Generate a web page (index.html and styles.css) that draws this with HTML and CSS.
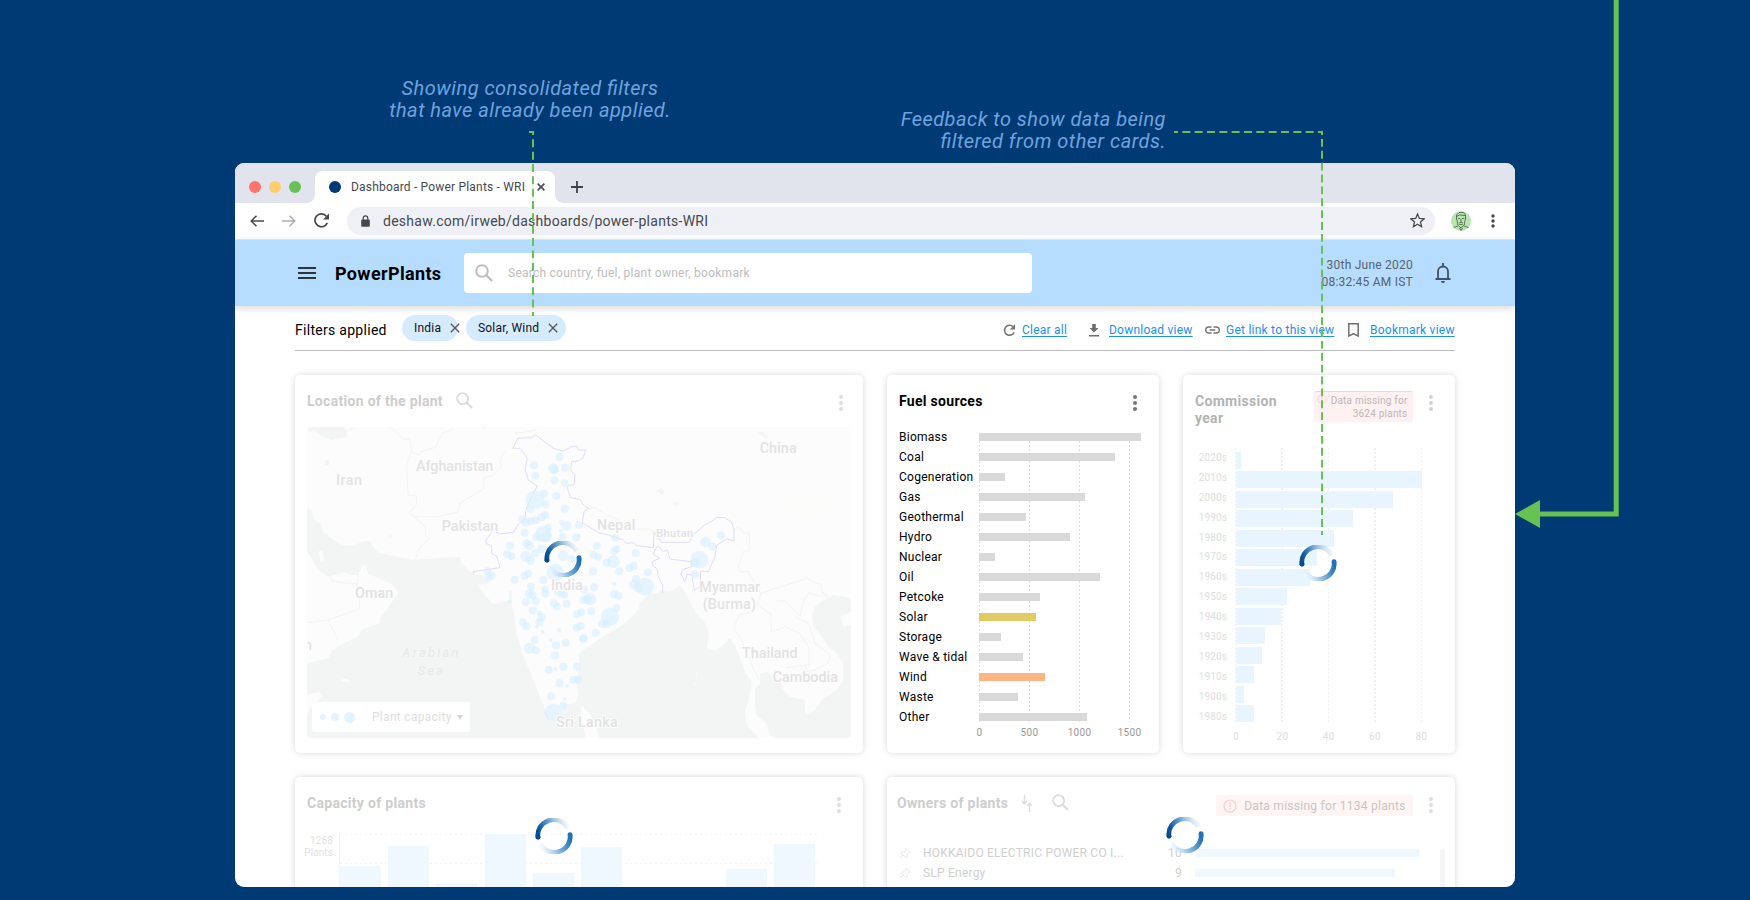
FILE: index.html
```html
<!DOCTYPE html>
<html lang="en">
<head>
<meta charset="utf-8">
<title>Dashboard - Power Plants - WRI</title>
<link rel="stylesheet" href="styles.css">
</head>
<body>
<svg class="defs" width="0" height="0">
  <defs>
    <linearGradient id="arc-top" gradientUnits="userSpaceOnUse" x1="3" y1="20" x2="34" y2="8">
      <stop offset="0" stop-color="#064a8c"/><stop offset=".15" stop-color="#0f5a9f"/><stop offset=".55" stop-color="#7fafd8"/><stop offset="1" stop-color="#e8f3fc" stop-opacity=".5"/>
    </linearGradient>
    <linearGradient id="arc-bottom" gradientUnits="userSpaceOnUse" x1="35" y1="18" x2="5" y2="29">
      <stop offset="0" stop-color="#1f6fb6"/><stop offset=".15" stop-color="#3a83c4"/><stop offset=".6" stop-color="#a5cbea"/><stop offset="1" stop-color="#eef7fe" stop-opacity=".5"/>
    </linearGradient>
    <symbol id="spinner" viewBox="0 0 38 36">
      <path d="M3 19.500A16 15.500 0 0 1 33 10" fill="none" stroke="url(#arc-top)" stroke-width="4.800"/>
      <path d="M35 16.500A16 15.500 0 0 1 5 26" fill="none" stroke="url(#arc-bottom)" stroke-width="4.800"/>
      <circle cx="3" cy="19.300" r="2.400" fill="#064a8c"/><circle cx="35" cy="16.700" r="2.400" fill="#2272b8"/>
    </symbol>
    <symbol id="search" viewBox="0 0 18 18"><circle cx="7" cy="7" r="5.800" fill="none" stroke="currentColor" stroke-width="2"/><path d="M11 11l6 6" stroke="currentColor" stroke-width="2.300"/></symbol>
    <symbol id="kebab" viewBox="0 0 4 16"><circle cx="2" cy="2" r="2"/><circle cx="2" cy="8" r="2"/><circle cx="2" cy="14" r="2"/></symbol>
    <symbol id="cross" viewBox="0 0 10 10"><path d="M.8.8l8.400 8.400M9.200.8L.8 9.200" stroke="currentColor" stroke-width="1.300"/></symbol>
    <symbol id="cross-bold" viewBox="0 0 8 8"><path d="M.6.6l6.800 6.800M7.400.6L.6 7.400" stroke="currentColor" stroke-width="1.500"/></symbol>
    <symbol id="alert" viewBox="0 0 14 14"><circle cx="7" cy="7" r="6" fill="none" stroke="currentColor" stroke-width="1.200"/><path d="M7 3.500v4.200M7 9.200v1.400" stroke="currentColor" stroke-width="1.400"/></symbol>
    <symbol id="pin" viewBox="0 0 14 14"><path d="M8 1l5 5-1.600.6-1.800 1.800-.2 3-1.600 1.200L2.500 7.200l1.200-1.400 3-.2L8.200 3z M4.500 9.500L1 13" fill="none" stroke="currentColor"/></symbol>
  </defs>
</svg>

<main class="window">
  <div class="tabstrip">
    <div class="lights"><i class="red"></i><i class="amber"></i><i class="green"></i></div>
    <div class="tab">
      <i class="favicon"></i><span>Dashboard - Power Plants - WRI</span>
      <svg class="tab-close"><use href="#cross-bold"/></svg>
    </div>
    <svg class="plus" viewBox="0 0 12 12"><path d="M6 0v12M0 6h12" stroke="#3f4145" stroke-width="1.800"/></svg>
  </div>

  <div class="toolbar">
    <svg class="nav" viewBox="0 0 14 12"><path d="M14 6H1.200M6.500.7L1.200 6l5.300 5.300" fill="none" stroke="#45484d" stroke-width="1.500"/></svg>
    <svg class="nav" viewBox="0 0 14 12"><path d="M0 6h12.800M7.500.7L12.800 6l-5.300 5.300" fill="none" stroke="#abafb6" stroke-width="1.500"/></svg>
    <svg class="reload" viewBox="0 0 14 14"><path d="M12.400 9.200A6 6 0 1 1 11.300 2.800L13 4.500" fill="none" stroke="#45484d" stroke-width="1.600"/><path d="M14 .5V6H8.500z" fill="#45484d"/></svg>
    <div class="omnibox">
      <svg class="lock" viewBox="0 0 9 12"><path d="M2.200 5V3.200a2.300 2.300 0 0 1 4.600 0V5" fill="none" stroke="#45484d" stroke-width="1.200"/><rect x=".2" y="4.400" width="8.600" height="7.400" rx="1" fill="#45484d"/></svg>
      <span>deshaw.com/irweb/dashboards/power-plants-WRI</span>
      <svg class="star" viewBox="0 0 14 14"><path d="M7 1l1.700 4.100 4.500.4-3.400 2.900 1 4.400L7 10.500l-3.800 2.300 1-4.400L.8 5.500l4.500-.4z" fill="none" stroke="#45484d" stroke-width="1.200"/></svg>
    </div>
    <svg class="avatar" viewBox="0 0 20 20"><circle cx="10" cy="10" r="10" fill="#b9e5b1"/><g fill="none" stroke="#33482f" stroke-width=".7"><path d="M5.500 9V4L8 1.500h4.500L14.500 4v5M5.500 5.500l3-1.500 5.500.5M6 9l.8 5L10 17l3.200-3L14 9M7 7.500h2.300M11 7.500h2.300M10 8v3M8 12.200l2-1 2 1M8.500 13.500h3M7 15l-4.500 1.500M13 15l4.500 1.500M8.500 17l1.500 2.500 1.500-2.500"/></g></svg>
    <svg class="menu" viewBox="0 0 4 14"><g fill="#45484d"><circle cx="2" cy="2" r="1.700"/><circle cx="2" cy="7" r="1.700"/><circle cx="2" cy="12" r="1.700"/></g></svg>
  </div>

  <header class="appbar">
    <svg class="burger" viewBox="0 0 18 12"><path d="M0 1h18M0 6h18M0 11h18" stroke="#2b333b" stroke-width="2"/></svg>
    <h1>PowerPlants</h1>
    <div class="searchbox"><svg><use href="#search"/></svg><span>Search country, fuel, plant owner, bookmark</span></div>
    <div class="clock">30th June 2020<br>08:32:45 AM IST</div>
    <svg class="bell" viewBox="0 0 16 20"><path d="M3 16V8.500a5 5 0 0 1 10 0V16" fill="none" stroke="#44525f" stroke-width="1.800"/><path d="M.5 16h15M8 0v3" stroke="#44525f" stroke-width="1.900"/><path d="M6 18a2 2 0 0 0 4 0z" fill="#44525f"/></svg>
  </header>

  <section class="content">
    <div class="filters">
      <span class="filters-title">Filters applied</span>
      <span class="chip india">India<svg><use href="#cross"/></svg></span>
      <span class="chip fuels">Solar, Wind<svg><use href="#cross"/></svg></span>
      <nav class="actions">
        <svg class="a-clear" viewBox="0 0 14 14"><path d="M12 9a5.400 5.400 0 1 1-1-6" fill="none" stroke="#757575" stroke-width="1.700"/><path d="M13 0v5.800H7.400z" fill="#757575"/></svg><a class="l-clear">Clear all</a>
        <svg class="a-down" viewBox="0 0 10 13"><path d="M3.200 0h3.600v4H9.500L5 8.600.5 4h2.700zM0 11h10v1.500H0z" fill="#6f6f6f"/></svg><a class="l-down">Download view</a>
        <svg class="a-link" viewBox="0 0 16 8"><path d="M7 .8H4a3.200 3.200 0 0 0 0 6.400h3M9 .8h3a3.200 3.200 0 0 1 0 6.400H9M5 4h6" fill="none" stroke="#757575" stroke-width="1.500"/></svg><a class="l-link">Get link to this view</a>
        <svg class="a-mark" viewBox="0 0 11 14"><path d="M.8.8h9.400v12.200L5.500 10.800.8 13z" fill="none" stroke="#6f6f6f" stroke-width="1.500"/></svg><a class="l-mark">Bookmark view</a>
      </nav>
    </div>

    <div class="cards">
      <article class="card location">
        <div class="card-head faded"><h2>Location of the plant</h2><svg class="find"><use href="#search"/></svg><svg class="kebab"><use href="#kebab"/></svg></div>
        <div class="map">
          <svg viewBox="51 171 1632 933" width="544" height="311">
            <rect x="51" y="171" width="1632" height="933" fill="#fcfcfc"/>
            <g fill="#f3f5f5">
              <path d="M51 171h112l8 12-2 18-45 9-30-12-20-13-23-4z"/>
              <path d="M51 415l14 10 10 25 20 15 5 20 25 20 30 20 35 3 25-13 25-3 10 18 15 18 35 7 70 15 70-5 70-5 5 20 20 20 15 12 30 5 22 20-37 8 12 20 33 38 48-13-3-30 10 5v40l10 40 5 50 20 60 20 50 20 50 25 60 15 40 25-5 15-25v-20l35-5 10-25-5-40 10-50-5-30 10-12 15-10 40-28 45-25 40-30 30-30 5-20 30-30h25l5-10 30 5 30-20 10 15 10 15 15 30 10 20 25 25 15 30v25l-5 30 25 8 25-18 20-22 15 22 15 40 20 50 15 20-10 60-10 30 3 30 15 25 28 29H51v-76l12-20 32-35-8-13-36 9v-94l64-16 10-20 20-15 60-30 10-20 53-20 2-15 20-25 10-15 25-35-15-25-40-18-35-14-7-23-10-5-13 30-25 2-15-10-25 8-30 5-20-15-15-20-10-20-14-20z"/>
              <path d="M1395 955l15-15v-30l25-5 15 20 20 5 10 30 20 20 45 10v45l30-15 20-30 45-30 20-30v-50l-20-30-25-20-25-40-20-20-5-30 10-30 25-20 30-15 53 10v424h-218l-25-14-10-34-30-25-5-30z"/>
              <circle cx="111" cy="278" r="8"/><path d="M297 493l11 6-10 9zM1404 187l15-2 16 14-9 8zM1102 362l12-8 10 12-8 10zM1148 397h20l-6 7h-12z"/>
            </g>
            <g fill="#fcfcfc"><path d="M875 1008q45 35 50 96h-35q-20-50-15-96zM1650 740l33-15v40l-20 5zM85 545l12-4 6 30-10 5z"/><ellipse cx="165" cy="932" rx="13" ry="4"/><path d="M1218 910l4-4-3 25zM1213 940l3-4v15z"/></g>
            <ellipse cx="1560" cy="410" rx="58" ry="38" fill="#fcfcfa"/>
            <g fill="none" stroke="#f0f0f0" stroke-width="2.500">
              <path d="M165 184l30-10M295 171l20 10 25 26h20l5 37 22 12 5-10 45-15 20-43 28-7 5-12h60l15-3 15 8 30-8"/>
              <path d="M365 244l-15 40 4 90 27 5-2 25-22 25 15 10 70 1 60-13 8-28 30-18 40-24 3-35 27-5 25-27-5-20 15-30M357 429l50 41v25l10 10-32 33-8 32M100 595l30 40 72 8 4-40M202 643l8 70-15 8-79 28-65 9M115 750l30 63M675 190l40-5 24-5"/>
              <path d="M885 420l30-8 30 20 40 15 30 30h60l20 10M1330 480l15-10 15 18 18 2v55l-15-5-18 45 5 20h28l2 10 22 35 10 20-10 38-20 18-35 8-15 40 25 40 20 50 15 35 15 30M1405 690l10-20 40-15 20-5 78-25 18 12 22 5 3 25 20 10-30 1-30-10-18 30-8 40-28-28-15-15-28-5M1410 710l20 15 12 5 2 55 40-15 45 20 28 45v50l-70 8M1515 740l40 20 20 60 45 35-5 25-40 20-25 5-5-28"/>
            </g>
            <path fill="none" stroke="#e0dcf9" stroke-width="3" d="M550 613V605L630 593 620 558 605 550V528L588 520V510L610 482 628 492 670 487 686 462 708 444 706 424 720 390 742 348 715 330 705 300 712 265 690 235H668L683 205 725 203 737 195 790 235 820 243 845 230 860 228 865 240H887L880 262 868 272 845 275 842 300 855 315 852 345 835 345 832 355 842 383 870 388 880 405 895 415 882 425 877 458 925 488 955 495 1000 510 1010 520 1030 518 1040 527 1090 533 1092 487 1115 517H1198L1210 495 1240 468 1265 453 1280 442 1305 443 1325 457 1332 480V513L1310 507 1280 525 1275 560 1255 605 1232 603 1230 650 1213 660 1205 615 1192 612 1185 635 1172 612 1180 598 1205 590 1203 575 1140 567 1132 540 1120 545 1105 528 1098 533 1090 552 1108 565 1087 575V585L1102 597 1105 620 1118 645V670"/>
            <g id="plants" fill="#d6efff" fill-opacity=".6"></g>
            <g class="places">
              <text x="138" y="345" textLength="78">Iran</text><text x="378" y="304" textLength="232">Afghanistan</text><text x="455" y="483" textLength="170">Pakistan</text><text x="195" y="684" textLength="115">Oman</text><text x="783" y="661" textLength="95">India</text><text x="1409" y="250" textLength="111">China</text><text x="921" y="480" textLength="115">Nepal</text><text x="1098" y="502" textLength="112" font-size="34">Bhutan</text><text x="1228" y="667" textLength="182">Myanmar</text><text x="1238" y="716" textLength="160">(Burma)</text><text x="1356" y="863" textLength="167">Thailand</text><text x="1448" y="937" textLength="196">Cambodia</text><text x="798" y="1071" textLength="185">Sri Lanka</text><text x="42" y="840">n</text>
              <g class="sea"><text x="337" y="862" textLength="168">Arabian</text><text x="383" y="915" textLength="76">Sea</text></g>
            </g>
          </svg>
          <div class="legend"><i></i><i></i><i></i><span>Plant capacity</span><b></b></div>
        </div>
        <svg class="spinner"><use href="#spinner"/></svg>
      </article>

      <article class="card fuel">
        <div class="card-head"><h2>Fuel sources</h2><svg class="kebab"><use href="#kebab"/></svg></div>
        <div class="fuel-chart"><div class="fuel-rows" id="fuel-rows"></div></div>
        <div class="axis fuel-axis"><span>0</span><span>500</span><span>1000</span><span>1500</span></div>
      </article>

      <article class="card commission">
        <div class="card-head"><h2>Commission<br>year</h2><div class="warn small"><svg><use href="#alert"/></svg>Data missing for<br>3624 plants</div><svg class="kebab"><use href="#kebab"/></svg></div>
        <div class="years-chart"><div class="years" id="years"></div><div class="year-bars" id="year-bars"></div></div>
        <div class="axis year-axis"><span>0</span><span>20</span><span>40</span><span>60</span><span>80</span></div>
        <svg class="spinner"><use href="#spinner"/></svg>
      </article>

      <article class="card capacity">
        <div class="card-head faded"><h2>Capacity of plants</h2><svg class="kebab"><use href="#kebab"/></svg></div>
        <div class="capacity-chart"><div class="cap-label">1268<br>Plants</div><div class="cap-bars" id="cap-bars"></div></div>
        <svg class="spinner"><use href="#spinner"/></svg>
      </article>

      <article class="card owners">
        <div class="card-head faded"><h2>Owners of plants</h2>
          <svg class="sort" viewBox="0 0 12 17"><path d="M3.500 0v8M1 6l2.500 3L6 6M8.500 17V9M6 11l2.500-3L11 11" fill="none" stroke="currentColor" stroke-width="1.400"/></svg>
          <svg class="find"><use href="#search"/></svg>
          <div class="warn wide"><svg><use href="#alert"/></svg>Data missing for 1134 plants</div>
          <svg class="kebab"><use href="#kebab"/></svg></div>
        <div class="owner-body">
          <div class="owner-rows">
            <div class="owner"><svg><use href="#pin"/></svg><span>HOKKAIDO ELECTRIC POWER CO I...</span><b>10</b><i class="ten"></i></div>
            <div class="owner"><svg><use href="#pin"/></svg><span>SLP Energy</span><b>9</b><i class="nine"></i></div>
          </div>
          <div class="scrollbar"></div>
        </div>
        <svg class="spinner"><use href="#spinner"/></svg>
      </article>
    </div>
  </section>
</main>

<p class="note note-filters">Showing consolidated filters<br>that have already been applied.</p>
<p class="note note-feedback">Feedback to show data being<br>filtered from other cards.</p>
<svg class="connectors" width="1750" height="900">
  <g fill="none" stroke="#65c253" stroke-width="2">
    <path d="M529 132h5"/>
    <path d="M533 131v185" stroke-dasharray="8 4.330" stroke-dashoffset="4"/>
    <path d="M1174 132h148" stroke-dasharray="8 4.330" stroke-dashoffset="4"/>
    <path d="M1322 131v404" stroke-dasharray="7.880 4" stroke-dashoffset="3.940"/>
    <path d="M1616.200 0v514H1538" stroke-width="5"/>
  </g>
  <path d="M1515 514l25-14v28z" fill="#65c253"/>
</svg>
<script src="charts.js"></script>
</body>
</html>
```

FILE: styles.css
```css
* { box-sizing: border-box; }
body { margin: 0; padding: 163px 0 0 235px; width: 1750px; height: 900px; overflow: hidden; position: relative; background: #003a74; font-family: Roboto, "Liberation Sans", sans-serif; }
svg { display: block; flex: none; }
.defs { position: absolute; }
h1, h2, p { margin: 0; }

.window { width: 1280px; height: 724px; overflow: hidden; background: #fff; border-radius: 9px; }

.tabstrip { height: 40px; background: #e1e4ec; display: flex; align-items: center; padding: 8px 0 0 14px; }
.lights { display: flex; gap: 8px; width: 66px; }
.lights i { width: 12px; height: 12px; border-radius: 50%; }
.red { background: #ff7468; }
.amber { background: #ffce6b; }
.green { background: #65c253; }
.tab { width: 240px; height: 32px; display: flex; align-items: center; background: #fff; border-radius: 8px 8px 0 0; padding-left: 14px; position: relative; color: #45484d; font-size: 12px; letter-spacing: .19px; white-space: nowrap; }
.tab::before, .tab::after { content: ""; position: absolute; bottom: 0; width: 8px; height: 8px; }
.tab::before { left: -8px; background: radial-gradient(circle at 0 0, transparent 7.500px, #fff 8px); }
.tab::after { right: -8px; background: radial-gradient(circle at 100% 0, transparent 7.500px, #fff 8px); }
.favicon { width: 12px; height: 12px; border-radius: 50%; background: #003a74; margin-right: 10px; }
.tab span { width: 186px; }
.tab-close { width: 8px; height: 8px; color: #45484d; }
.plus { width: 12px; height: 12px; margin-left: 16px; }

.toolbar { height: 37px; display: flex; align-items: center; padding: 0 0 1px 15px; border-bottom: 1px solid #e4eefa; }
.nav { width: 14px; height: 12px; margin-right: 18px; }
.reload { width: 15px; height: 15px; margin-right: 18px; }
.omnibox { width: 1088px; height: 28px; border-radius: 14px; background: #eff0f5; display: flex; align-items: center; padding-left: 14px; color: #45484d; font-size: 14px; letter-spacing: .27px; }
.lock { width: 9px; height: 12px; margin-right: 13px; }
.omnibox span { width: 1027px; }
.star { width: 15px; height: 15px; }
.avatar { width: 20px; height: 20px; margin-left: 16px; }
.menu { width: 4px; height: 14px; margin-left: 20px; }

.appbar { height: 66px; background: #b6ddff; box-shadow: 0 2px 8px rgba(0, 0, 0, .16); position: relative; display: flex; align-items: center; padding-left: 63px; }
.burger { width: 18px; height: 12px; margin-right: 19px; }
.appbar h1 { width: 129px; font-size: 18px; font-weight: 700; letter-spacing: .35px; }
.searchbox { width: 568px; height: 40px; border-radius: 4px; background: #fff; display: flex; align-items: center; padding-left: 11px; color: #bdbdbd; font-size: 12px; letter-spacing: .25px; }
.searchbox svg { width: 18px; height: 18px; margin-right: 15px; }
.clock { width: 381px; padding-top: 1px; text-align: right; font-size: 12px; line-height: 17px; letter-spacing: .23px; color: #56616c; }
.bell { width: 16px; height: 20px; margin-left: 22px; }

.content { padding: 0 60px; }
.filters { height: 45px; border-bottom: 1px solid #bdbdbd; display: flex; align-items: flex-start; }
.filters-title { width: 107px; padding-top: 15px; font-size: 14px; line-height: 18px; letter-spacing: .29px; }
.chip { height: 26px; margin-top: 9px; border-radius: 13px; background: #d6ebff; padding-left: 12px; display: flex; align-items: center; font-size: 12px; letter-spacing: .2px; color: #111; white-space: nowrap; }
.chip svg { width: 10px; height: 10px; color: #555; }
.india { width: 56px; margin-right: 8px; }
.india svg { margin-left: 9px; }
.fuels { width: 100px; }
.fuels svg { margin-left: 9px; }
.actions { display: flex; align-items: center; height: 16px; margin: 16px 0 0 auto; font-size: 12px; letter-spacing: .24px; color: #2090f0; white-space: nowrap; }
.actions a { text-decoration: underline; text-underline-offset: 2px; }
.a-clear { width: 13px; height: 13px; margin-right: 6px; }
.l-clear { width: 67px; }
.a-down { width: 10px; height: 13px; margin-right: 10px; }
.l-down { width: 96px; }
.a-link { width: 15px; height: 8px; margin-right: 6px; }
.l-link { width: 122px; }
.a-mark { width: 11px; height: 14px; margin-right: 11px; }
.l-mark { width: 85px; }

.cards { margin-top: 24px; display: grid; grid-template-columns: 568px 272px 272px; grid-auto-rows: 378px; gap: 24px; }
.card { position: relative; border-radius: 5px; background: #fff; box-shadow: 0 0 6px rgba(0, 0, 0, .16); padding: 0 12px; }
.owners { grid-column: span 2; padding: 0 10px; }
.card-head { height: 52px; display: flex; align-items: flex-start; padding-top: 18px; }
.card-head h2 { font-size: 14px; line-height: 17px; font-weight: 700; letter-spacing: .3px; white-space: nowrap; }
.faded h2 { color: #cdcdcd; }
.kebab { width: 4px; height: 16px; fill: #777; margin: 2px 8px 0 auto; }
.faded .kebab { fill: #ddd; }
.find { width: 17px; height: 17px; color: #ddd; }
.spinner { position: absolute; width: 38px; height: 36px; }

.location .find { margin: -1px 0 0 13px; }
.map { position: relative; border-radius: 4px; overflow: hidden; width: 544px; height: 311px; }
.places { font-family: Roboto, sans-serif; font-size: 43px; font-weight: 500; fill: #e2e2e2; stroke: #fdfdfd; stroke-width: 6px; paint-order: stroke; }
.sea { font-style: italic; font-size: 38px; font-weight: 400; fill: #e6e8e8; stroke: none; }
.legend { position: absolute; left: 5px; bottom: 6px; width: 158px; height: 30px; border-radius: 3px; background: #fff; display: flex; align-items: center; padding-left: 8px; color: #dedede; font-size: 12px; letter-spacing: .3px; }
.legend i { border-radius: 50%; background: #e0f4ff; width: 6px; height: 6px; margin-right: 5px; }
.legend i + i { width: 8px; height: 8px; }
.legend i + i + i { width: 11px; height: 11px; margin-right: 17px; }
.legend b { margin-left: 5px; border: 3px solid transparent; border-top: 5px solid #d4d4d4; border-bottom: 0; }
.location .spinner { left: 249px; top: 166px; }

.fuel .kebab { margin-right: 10px; }
.fuel-chart { margin: 6px 0 0 80px; height: 289px; background: repeating-linear-gradient(to bottom, transparent 0 2px, #fff 2px 4px), repeating-linear-gradient(to right, #dedede 0 1px, transparent 1px 50px); }
.fuel-rows { margin-left: -80px; }
.fuel-row { height: 20px; display: flex; align-items: flex-start; font-size: 12px; line-height: 8px; letter-spacing: .25px; white-space: nowrap; }
.fuel-row span { width: 80px; }
.fuel-row i { height: 8px; background: #d9d9d9; }
.fuel-row i.solar { background: #e0cc63; }
.fuel-row i.wind { background: #ffb581; }
.axis { display: flex; font-size: 10px; line-height: 12px; letter-spacing: .3px; color: #999; }
.axis span { text-align: center; }
.fuel-axis { margin: 5px 0 0 55.500px; width: 200px; }
.fuel-axis span { width: 50px; flex: none; }

.commission .card-head { height: 73px; padding-top: 16px; }
.commission h2 { color: #b4b4b4; width: 106px; padding-top: 2px; flex: none; }
.commission .kebab { fill: #d2d2d2; margin: 4px 10px 0 auto; }
.warn { background: #fff0f1; color: #c0b6b6; white-space: nowrap; position: relative; flex: none; }
.warn svg { color: #ffc9ca; }
.warn.small { width: 99px; height: 31px; margin-left: 13px; padding: 2px 5.500px 0 0; border-top: 1px solid #ffd0d2; text-align: right; font-size: 10px; line-height: 13px; letter-spacing: .22px; border-radius: 2px; }
.warn.small svg { position: absolute; left: 3px; top: 2px; width: 10px; height: 10px; }
.years-chart { display: flex; height: 275px; }
.years { width: 32px; display: flex; flex-direction: column; padding-top: 4px; gap: 8px; text-align: right; font-size: 10px; line-height: 12px; letter-spacing: .1px; color: #dedede; }
.years span { height: 11.900px; }
.year-bars { margin-left: 8px; width: 187px; padding-top: 4px; display: flex; flex-direction: column; gap: 2.800px; background: repeating-linear-gradient(to bottom, transparent 0 2px, #fff 2px 4px), repeating-linear-gradient(to right, #f0f0f0 0 1px, transparent 1px 46.500px); }
.year-bars i { height: 16.700px; margin-left: 1px; background: #e8f5ff; flex: none; }
.year-axis { margin: 8px 0 0 18px; color: #dedede; }
.year-axis span { width: 46.300px; flex: none; }
.commission .spinner { left: 116px; top: 170px; }

.capacity .kebab { margin-right: 10px; }
.capacity-chart { display: flex; height: 326px; margin-left: -12px; padding-top: 3px; }
.cap-label { width: 38px; text-align: right; font-size: 10px; line-height: 12px; letter-spacing: .1px; color: #e2e2e2; padding-top: 3px; }
.cap-bars { width: 481px; margin-left: 6px; margin-top: 2px; display: flex; gap: 7.200px; align-items: flex-end; border-left: 1px solid #f4f4f4; background: linear-gradient(to right, transparent 50%, #fff 50%) 0 0 / 5px 100%, linear-gradient(#f2f2f2, #f2f2f2) 0 0 / 100% 1px no-repeat, linear-gradient(#f2f2f2, #f2f2f2) 0 29px / 100% 1px no-repeat; }
.cap-bars i { width: 41px; background: #eff7ff; flex: none; }
.capacity .spinner { left: 240px; top: 41px; }

.sort { width: 12px; height: 17px; color: #ddd; margin-left: 13px; }
.owners .find { margin-left: 19px; margin-top: -1px; }
.wide { width: 197px; height: 21px; display: flex; align-items: center; margin-left: 147px; font-size: 12px; letter-spacing: .27px; padding-left: 7px; background: #fff5f5; color: #cbc4c4; }
.wide svg { width: 14px; height: 14px; margin-right: 7px; }
.owners .kebab { margin-right: 12px; }
.owner-body { display: flex; margin-top: 14px; padding-left: 2px; }
.owner-rows { width: 541px; }
.owner { height: 20px; display: flex; align-items: center; font-size: 12px; letter-spacing: .22px; color: #cfcfcf; }
.owner svg { width: 12px; height: 12px; margin-right: 12px; color: #e2e2e2; }
.owner span { width: 229px; }
.owner b { width: 30px; text-align: right; font-weight: 400; margin-right: 13px; }
.owner i { height: 8px; background: #eff7ff; }
.ten { width: 224px; }
.nine { width: 200px; }
.scrollbar { width: 5px; height: 200px; margin-top: 6px; border-radius: 3px; background: #f5f5f5; }
.owners .spinner { left: 279px; top: 40px; }

.note { position: absolute; color: #6fa3df; font-size: 20px; line-height: 22px; font-style: italic; letter-spacing: .47px; font-feature-settings: "liga" 1; white-space: nowrap; }
.note-filters { left: 380px; top: 77px; width: 300px; text-align: center; }
.note-feedback { right: 584px; top: 108px; text-align: right; }
.connectors { position: absolute; left: 0; top: 0; }
```

FILE: charts.js
```js
const fuels = [["Biomass", 162], ["Coal", 136], ["Cogeneration", 26], ["Gas", 106], ["Geothermal", 47], ["Hydro", 91], ["Nuclear", 16], ["Oil", 121], ["Petcoke", 61], ["Solar", 57], ["Storage", 22], ["Wave & tidal", 44], ["Wind", 66], ["Waste", 39], ["Other", 108]];
document.getElementById("fuel-rows").innerHTML = fuels.map(([name, w]) =>
  `<div class="fuel-row"><span>${name.replace("&", "&amp;")}</span><i class="${name.split(" ")[0].toLowerCase()}" style="width:${w}px"></i></div>`).join("");

const years = [["2020s", 5], ["2010s", 186], ["2000s", 157], ["1990s", 117], ["1980s", 98], ["1970s", 81], ["1960s", 74], ["1950s", 51], ["1940s", 45], ["1930s", 29], ["1920s", 26], ["1910s", 18], ["1900s", 8], ["1980s", 18]];
document.getElementById("years").innerHTML = years.map(([y]) => `<span>${y}</span>`).join("");
document.getElementById("year-bars").innerHTML = years.map(([, w]) => `<i style="width:${w}px"></i>`).join("");

const capacity = [289, 309, 272, 321, 282, 308, 0, 0, 286, 311];
document.getElementById("cap-bars").innerHTML = capacity.map(h => `<i style="height:${h}px"></i>`).join("");

/* x, y, radius of each plant on the map */
const plants = `732 286 12,736 317 12,790 296 16,794 299 12,809 261 12,825 293 12,793 331 12,824 339 11,735 390 28,762 371 12,799 378 12,767 403 12,721 418 11,824 416 12,697 448 12,708 458 12,723 453 12,737 451 12,754 442 12,765 435 12,704 488 12,740 501 13,760 492 24,773 473 11,770 500 16,815 457 8,830 468 15,813 483 6,815 495 4,867 465 12,858 502 12,866 497 6,818 500 11,660 527 12,652 553 12,665 559 11,709 520 12,718 526 14,708 559 17,722 571 13,754 537 12,735 550 12,820 557 16,845 568 12,796 607 26,593 604 12,605 617 12,596 621 12,674 629 12,704 617 12,715 611 12,760 630 12,723 650 12,765 658 11,766 671 12,718 671 14,728 676 12,708 696 12,737 694 12,659 695 6,728 721 12,804 665 12,816 671 12,824 675 11,830 701 12,792 700 12,801 710 12,882 659 13,892 688 14,880 690 12,748 729 8,755 742 13,748 757 12,698 756 12,709 769 12,740 770 6,758 786 6,807 781 6,862 733 12,874 727 12,872 768 12,860 773 12,880 805 12,782 810 6,734 810 12,798 826 12,827 818 12,719 835 17,738 841 12,795 856 12,776 900 12,797 896 6,820 890 12,861 890 12,851 929 12,864 929 12,809 940 12,831 947 6,783 979 12,824 986 6,820 1007 12,791 1028 27,920 527 12,910 554 12,924 560 12,976 503 12,973 543 12,981 537 11,950 578 12,970 575 19,1037 549 12,1018 594 12,1031 588 12,1074 607 12,988 604 12,909 603 12,912 652 12,973 642 6,1038 627 12,1031 643 13,1044 653 14,1065 650 27,972 672 12,986 677 12,901 688 18,904 724 12,960 740 27,979 714 12,936 762 12,950 762 12,917 788 12,880 806 12,1247 517 16,1267 530 12,1293 496 12,1228 569 27,1215 578 13,1215 613 12`;
document.getElementById("plants").innerHTML = plants.split(",").map(p => {
  const [x, y, r] = p.split(" ");
  return `<circle cx="${x}" cy="${y}" r="${r}"/>`;
}).join("");
```
